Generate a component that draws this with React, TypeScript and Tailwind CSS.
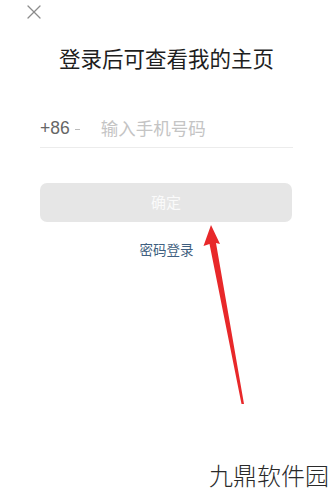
import { X } from 'lucide-react'

const font = { fontFamily: '"Noto Sans CJK SC", "Noto Sans", sans-serif' }

export default function App() {
  return (
    <div className="relative h-[496px] w-[333px] overflow-hidden bg-white" style={font}>
      <div className="flex h-6 items-center pl-[22px]">
        <X className="h-6 w-6 text-[#8c8c8c]" strokeWidth={1.3} />
      </div>

      <h1 className="mt-[20px] text-center text-[21.5px] leading-[28px] font-normal text-[#1e1e1e]">
        登录后可查看我的主页
      </h1>

      <div className="mx-[40px] mt-[38px] flex h-[38px] items-center border-b border-[#ececec]">
        <span className="text-[17.5px] text-[#666]" style={{ fontFamily: '"Liberation Sans", sans-serif' }}>
          +86
        </span>
        <span className="ml-[5px] mt-[1px] h-[1px] w-[5px] bg-[#bbb]" />
        <span className="ml-[21px] text-[17.5px] text-[#c4c4c4]">输入手机号码</span>
      </div>

      <button className="mx-[40px] mt-[35px] flex h-[39px] w-[252px] items-center justify-center rounded-[7px] bg-[#e6e6e6] text-[15px] text-[#fafafa]">
        确定
      </button>

      <div className="mt-[17px] text-center text-[13.5px] text-[#3f5f80]">密码登录</div>

      <svg className="absolute left-0 top-0" width="333" height="496" viewBox="0 0 333 496">
        <path d="M211 225 L220 244 L216 243 L244 404 L241.5 404 L209.5 244 L203.5 246 Z" fill="#e8282a" />
      </svg>

      <div className="absolute bottom-[6px] right-[4px] text-[24px] font-light leading-[30px] text-[#2a2a2a]">
        九鼎软件园
      </div>
    </div>
  )
}
